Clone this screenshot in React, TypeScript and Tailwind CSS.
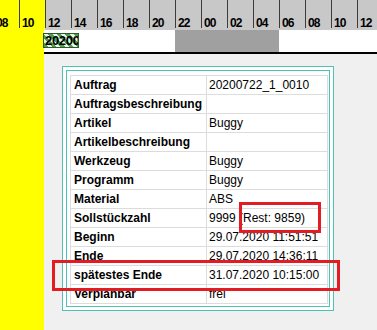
import React from 'react';

const HOURS = ['08', '10', '12', '14', '16', '18', '20', '22', '00', '02', '04', '06', '08', '10', '12'];

const ROWS: [string, React.ReactNode][] = [
  ['Auftrag', '20200722_1_0010'],
  ['Auftragsbeschreibung', ''],
  ['Artikel', 'Buggy'],
  ['Artikelbeschreibung', ''],
  ['Werkzeug', 'Buggy'],
  ['Programm', 'Buggy'],
  ['Material', 'ABS'],
  ['Sollstückzahl', '9999 (Rest: 9859)'],
  ['Beginn', '29.07.2020 11:51:51'],
  ['Ende', '29.07.2020 14:36:11'],
  ['spätestes Ende', '31.07.2020 10:15:00'],
  ['Verplanbar', 'frei'],
];

export default function App() {
  return (
    <div
      className="relative w-[377px] h-[330px] overflow-hidden bg-[#f0f0f0] text-black flex flex-col"
      style={{ fontFamily: '"Liberation Sans", Arial, sans-serif' }}
    >
      {/* time scale */}
      <div className="flex h-[30px] ml-[-7px] shrink-0">
        {HOURS.map((h, i) => (
          <div
            key={i}
            className={`flex w-[26px] shrink-0 ${i < 2 ? 'bg-[#ffff00]' : 'bg-[#c8c8c8]'}`}
          >
            <div className="w-px h-[28px] bg-[#3c3c3c]" />
            <span className="self-end ml-[2px] mb-[1px] text-[12px] leading-[12px] font-bold tracking-[-1px]">
              {h}
            </span>
          </div>
        ))}
      </div>

      {/* lane */}
      <div className="flex h-[24px] shrink-0">
        <div className="w-[44px] bg-[#ffff00]" />
        <div className="relative flex-1 bg-white border-b-2 border-black">
          <div className="absolute left-[131px] top-0 w-[104px] h-[22px] bg-[#a0a0a0]" />
          <div className="absolute left-[-1px] top-[3px] w-[36px] h-[15px] border border-[#2d5a2d] overflow-hidden bg-[repeating-linear-gradient(45deg,#4f9f4f_0px,#4f9f4f_3px,#e8f4e8_3px,#e8f4e8_6px)]">
            <span className="block pl-[1px] text-[13px] leading-[13px] font-bold tracking-[-0.3px] whitespace-nowrap">
              20200
            </span>
          </div>
        </div>
      </div>

      {/* body */}
      <div className="flex flex-1">
        <div className="w-[44px] bg-[#ffff00]" />
        <div className="flex-1 pl-[18px] pt-[12px]">
          <div className="w-[272px] border border-[#4fc3b3] bg-white p-[3px]">
            <div className="border border-[#4fc3b3] pt-[4px] pl-[3px] pr-[1px] pb-[2px]">
              <div className="w-[258px] border-t border-l border-[#dcdcdc] text-[12px]">
                {ROWS.map(([label, value]) => (
                  <div key={label} className="flex h-[19px] border-b border-[#dcdcdc]">
                    <div className="w-[136px] shrink-0 border-r border-[#dcdcdc] pl-[3px] font-bold leading-[18px] whitespace-nowrap">
                      {label}
                    </div>
                    <div className="flex-1 border-r border-[#dcdcdc] pl-[2px] leading-[18px] whitespace-nowrap">
                      {value}
                    </div>
                  </div>
                ))}
              </div>
            </div>
          </div>
        </div>
      </div>

      {/* highlight boxes */}
      <div className="absolute left-[239px] top-[202px] w-[82px] h-[31px] border-[3px] border-[#e31b23]" />
      <div className="absolute left-[52px] top-[260px] w-[288px] h-[31px] border-[3px] border-[#e31b23]" />
    </div>
  );
}
